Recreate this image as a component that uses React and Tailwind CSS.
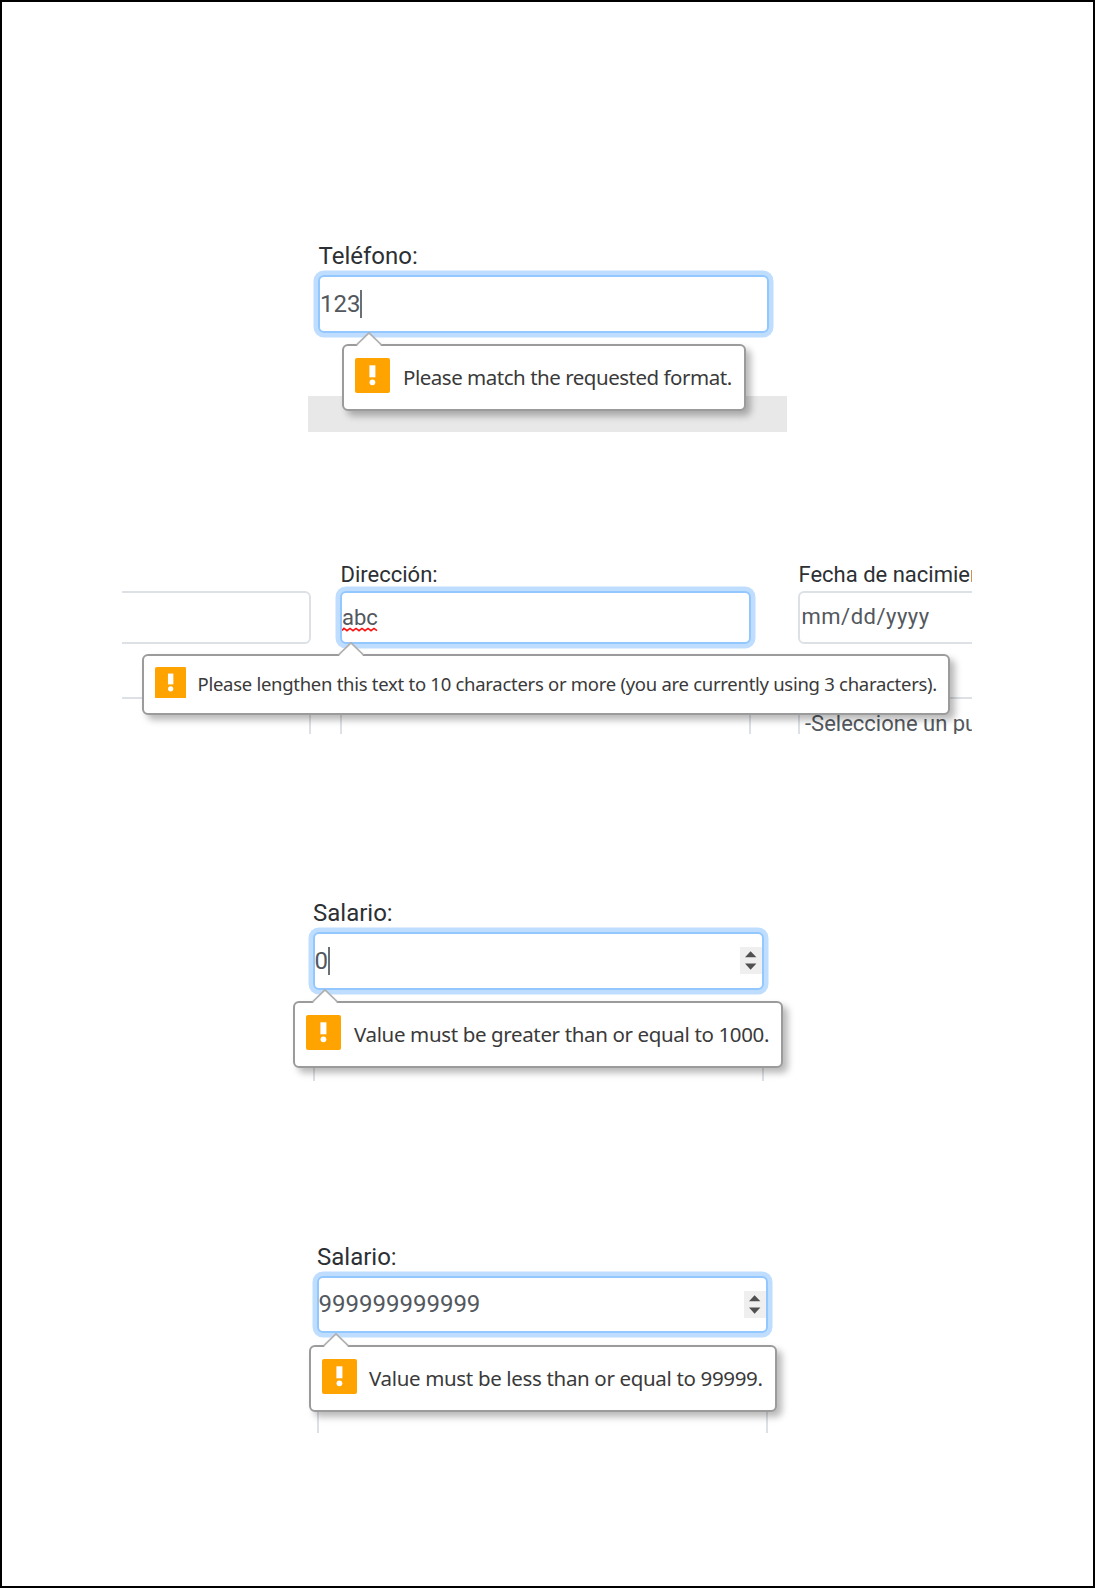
import React from "react";

const input = "box-border border-2 bg-white flex items-center font-['Roboto',sans-serif] text-[#53585e] whitespace-nowrap";
const focused = "border-[#93c7ff] rounded-[6px] shadow-[0_0_0_4.5px_#bfdeff]";
const plain = "border-[#dde1e6] rounded-[6px]";
const label = "block font-['Roboto',sans-serif] text-[#2c3034] whitespace-nowrap";

function Caret() {
  return <span className="w-[1.5px] h-[28px] bg-[#6b7076]" />;
}

function Spinner() {
  return (
    <svg className="ml-auto shrink-0" width="22" height="27" viewBox="0 0 22 27">
      <rect width="22" height="27" fill="#efefef" />
      <path d="M5 10.3 10.6 4.2 16.4 10.3ZM5 16.4 10.6 22.8 16.4 16.4Z" fill="#505050" />
    </svg>
  );
}

function WarningIcon({ className }) {
  return (
    <svg className={`shrink-0 ${className}`} viewBox="0 0 35 35">
      <rect width="35" height="35" rx="2" fill="#ffa300" />
      <rect x="14.4" y="7.3" width="6" height="12" fill="#fff" />
      <circle cx="17.4" cy="24.3" r="2.9" fill="#fff" />
    </svg>
  );
}

function Bubble({ className, arrow, icon, text, children }) {
  return (
    <div className={`absolute box-border flex items-center rounded-[6px] border-2 border-[#9b9b9b] bg-white shadow-[5px_5px_7px_rgba(0,0,0,0.28)] ${className}`}>
      <svg className={`absolute -top-[14px] ${arrow}`} width="26" height="15" viewBox="0 0 26 15">
        <path d="M1 13.5 13 1 25 13.5V15H1Z" fill="#fff" />
        <path d="M0.5 13 13 0.8 25.5 13" fill="none" stroke="#b0b0b0" strokeWidth="1.7" />
      </svg>
      <WarningIcon className={icon} />
      <span className={`whitespace-nowrap font-['Noto_Sans',sans-serif] text-[#3a3a3a] ${text}`}>{children}</span>
    </div>
  );
}

function SalaryField({ className, value, caret, children }) {
  return (
    <section className={`relative ${className}`}>
      <label className={`${label} pl-[0.5px] text-[24px] leading-[30px] h-[34px]`}>Salario:</label>
      <div className={`${input} ${focused} h-[57.5px] w-[451px] text-[24px]`}>
        {value}
        {caret && <Caret />}
        <Spinner />
      </div>
      {children}
    </section>
  );
}

export default function App() {
  return (
    <main className="box-border flex h-[1588px] w-[1095px] flex-col overflow-hidden border-2 border-black bg-white">
      <section className="relative mt-[238px] ml-[306px] h-[192px] w-[479px] shrink-0 pl-[10px]">
        <label className={`${label} h-[35px] pl-[0.5px] pt-[1px] text-[24px] leading-[30px]`}>Teléfono:</label>
        <div className={`${input} ${focused} h-[57.5px] w-[451px] text-[24px]`}>
          123
          <Caret />
        </div>
        <div className="-ml-[10px] mt-[63px] h-[36.5px] bg-[#e8e8e8]" />
        <Bubble className="left-[34px] top-[104px] h-[67px] w-[404px] pl-[11px]" arrow="left-[11.5px]" icon="size-[35px] -mt-[4px]" text="ml-[13px] text-[20.5px] tracking-[-0.48px]">
          Please match the requested format.
        </Bubble>
      </section>

      <section className="relative mt-[128px] ml-[120px] h-[174px] w-[850px] shrink-0">
        <div className="h-[174px] overflow-hidden">
          <div className="grid h-[31px] grid-cols-[218.5px_458px_173.5px] pt-[1px] text-[22px] leading-[28px]">
            <span />
            <label className={label}>Dirección:</label>
            <label className={`${label} overflow-hidden`}>Fecha de nacimiento:</label>
          </div>
          <div className="flex h-[53px]">
            <div className={`${input} ${plain} w-[209px] shrink-0 -ml-[20px]`} />
            <div className={`${input} ${focused} ml-[29px] w-[411px] shrink-0 text-[22px]`}>
              <span className="relative">
                abc
                <svg className="absolute left-0 bottom-[2px]" width="36" height="5" viewBox="0 0 36 5">
                  <path d="M0 3.5 2 1.4 5 3.7 8 1.4 11 3.7 14 1.4 17 3.7 20 1.4 23 3.7 26 1.4 29 3.7 32 1.4 35 3.7" fill="none" stroke="#f11" strokeWidth="1.6" />
                </svg>
              </span>
            </div>
            <div className={`${input} ${plain} ml-[47px] w-[411px] shrink-0 pl-[1.5px] text-[22px]`}>
              <span className="-mt-[2px] tracking-[0.5px]">mm/dd/yyyy</span>
            </div>
          </div>
          <div className="mt-[53px] flex h-[52.5px]">
            <div className={`${input} ${plain} w-[209px] shrink-0 -ml-[20px]`} />
            <div className={`${input} ${plain} ml-[29px] w-[411px] shrink-0`} />
            <div className={`${input} ${plain} ml-[47px] w-[411px] shrink-0 pl-[5px] text-[22px]`}>
              -Seleccione un puesto-
            </div>
          </div>
        </div>
        <Bubble className="left-[20px] top-[94px] h-[61px] w-[807.5px] pl-[10.5px]" arrow="left-[193.5px]" icon="size-[31.5px] -mt-[4px]" text="ml-[11.5px] -mt-[1px] text-[18.5px] tracking-[-0.28px]">
          Please lengthen this text to 10 characters or more (you are currently using 3 characters).
        </Bubble>
      </section>

      <SalaryField className="mt-[164px] ml-[310.5px] h-[183px] w-[451px] shrink-0" value="0" caret>
        <div className="mt-[40px] h-[51.5px] border-x-2 border-[#dde1e6]" />
        <Bubble className="-left-[19.5px] top-[103px] h-[66.5px] w-[490px] pl-[11px]" arrow="left-[16.5px]" icon="size-[35px] -mt-[4px]" text="ml-[13px] mt-[1px] text-[20.5px] tracking-[-0.36px]">
          Value must be greater than or equal to 1000.
        </Bubble>
      </SalaryField>

      <SalaryField className="mt-[160.5px] ml-[314.5px] h-[191px] w-[451px] shrink-0" value="999999999999">
        <div className="mt-[40px] h-[59.5px] border-x-2 border-[#dde1e6]" />
        <Bubble className="-left-[8px] top-[103.5px] h-[66.5px] w-[468.5px] pl-[11px]" arrow="left-[12px]" icon="size-[35px] -mt-[4px]" text="ml-[12.5px] mt-[1px] text-[20.5px] tracking-[-0.34px]">
          Value must be less than or equal to 99999.
        </Bubble>
      </SalaryField>
    </main>
  );
}
